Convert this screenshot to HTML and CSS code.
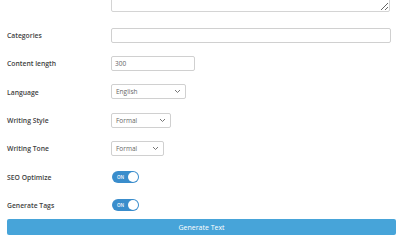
FILE: index.html
```
<!DOCTYPE html>
<html>
<head>
    <title>Text Generator Settings</title>
    <link rel="stylesheet" href="styles.css">
</head>
<body>
    <div class="settings">
        <div class="field-text">
            <textarea class="textarea"></textarea>
        </div>

        <div class="row">
            <label class="label">Categories</label>
            <input type="text" class="input input-wide">
        </div>
        <div class="row">
            <label class="label">Content length</label>
            <input type="text" class="input input-short" value="300">
        </div>
        <div class="row">
            <label class="label">Language</label>
            <div class="select select-lang">English
                <svg class="chevron" width="7" height="5" viewBox="0 0 7 5"><polyline points="1,1 3.5,3.5 6,1" fill="none" stroke="#777" stroke-width="1"/></svg>
            </div>
        </div>
        <div class="row">
            <label class="label">Writing Style</label>
            <div class="select select-style">Formal
                <svg class="chevron" width="7" height="5" viewBox="0 0 7 5"><polyline points="1,1 3.5,3.5 6,1" fill="none" stroke="#777" stroke-width="1"/></svg>
            </div>
        </div>
        <div class="row">
            <label class="label">Writing Tone</label>
            <div class="select select-tone">Formal
                <svg class="chevron" width="7" height="5" viewBox="0 0 7 5"><polyline points="1,1 3.5,3.5 6,1" fill="none" stroke="#777" stroke-width="1"/></svg>
            </div>
        </div>
        <div class="row">
            <label class="label">SEO Optimize</label>
            <div class="toggle"><span class="toggle-text">ON</span><span class="knob"></span></div>
        </div>
        <div class="row">
            <label class="label">Generate Tags</label>
            <div class="toggle"><span class="toggle-text">ON</span><span class="knob"></span></div>
        </div>

        <button class="generate">Generate Text</button>
    </div>
</body>
</html>
```

FILE: styles.css
```
body {
    margin: 0;
    font-family: "Open Sans", "Noto Sans", sans-serif;
    background: #fff;
    overflow: hidden;
}
.settings {
    margin-top: -30px;
    padding: 0 5px 0 7px;
}
.field-text {
    padding-left: 104px;
    padding-right: 5px;
    margin-bottom: 9px;
}
.textarea {
    display: block;
    box-sizing: border-box;
    width: 100%;
    height: 42px;
    border: 1px solid #d4d4d4;
    border-radius: 2px;
    resize: vertical;
}
.row {
    display: flex;
    align-items: center;
    height: 28.33px;
}
.label {
    width: 104px;
    flex-shrink: 0;
    padding-top: 1px;
    font-size: 6.8px;
    font-weight: 600;
    color: #3f3f3f;
}
.input {
    box-sizing: border-box;
    height: 15px;
    border: 1px solid #d0d0d0;
    border-radius: 2px;
    padding: 0 3px;
    font-family: inherit;
    font-size: 6.5px;
    color: #666;
}
.input-wide {
    width: 280px;
}
.input-short {
    width: 84px;
}
.select {
    box-sizing: border-box;
    height: 15px;
    border: 1px solid #d0d0d0;
    border-radius: 2px;
    padding: 0 4px;
    font-size: 6.5px;
    color: #666;
    display: flex;
    align-items: center;
    justify-content: space-between;
}
.select-lang {
    width: 75px;
}
.select-style {
    width: 60px;
}
.select-tone {
    width: 53px;
}
.toggle {
    box-sizing: border-box;
    width: 27px;
    height: 12px;
    margin-left: 1px;
    border-radius: 6px;
    background: #3a8dcc;
    display: flex;
    align-items: center;
    justify-content: space-between;
    padding: 0 1px 0 5px;
}
.toggle-text {
    font-size: 4.5px;
    font-weight: 600;
    color: #fff;
}
.knob {
    width: 10px;
    height: 10px;
    border-radius: 50%;
    background: #fff;
}
.generate {
    display: block;
    width: 389px;
    height: 16px;
    margin-top: 0;
    background: #47a4d9;
    color: #fff;
    border: none;
    border-radius: 2px;
    font-family: inherit;
    font-size: 7px;
    padding: 0;
}
```
